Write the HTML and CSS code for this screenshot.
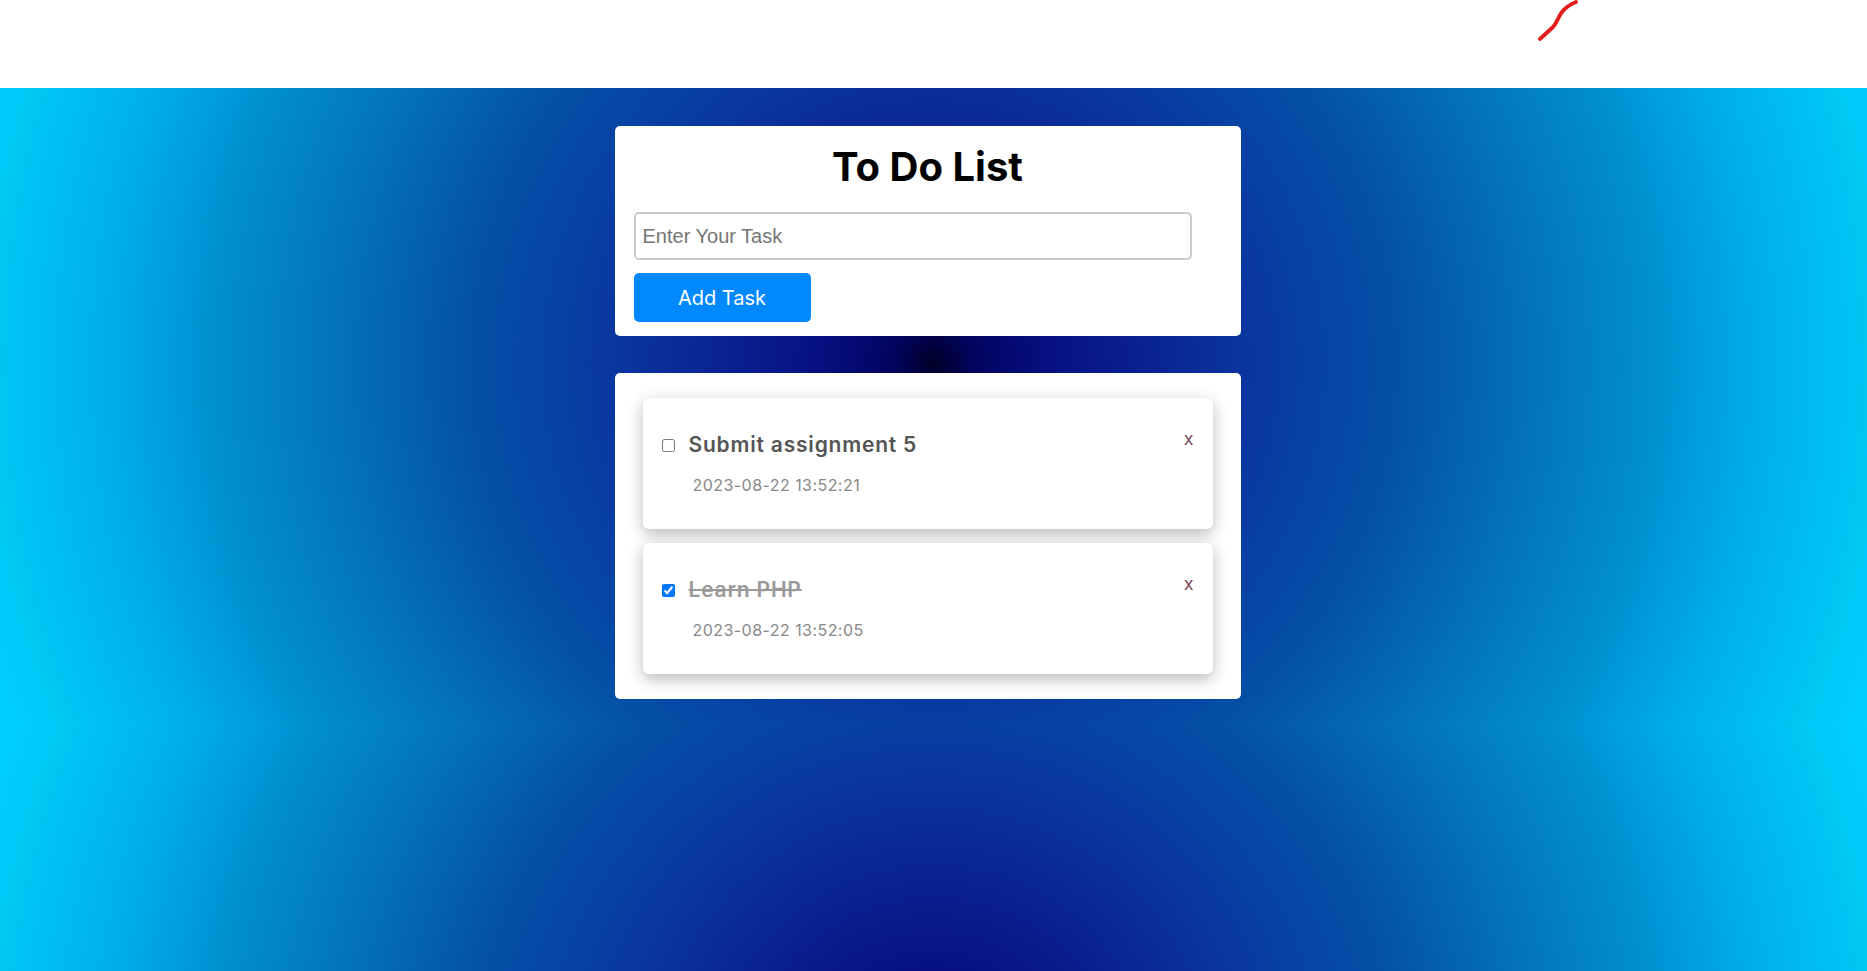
FILE: index.html
```html
<!DOCTYPE html>
<html lang="en">
<head>
<meta charset="utf-8">
<title>To Do List</title>
<link rel="stylesheet" href="styles.css">
</head>
<body>
<header class="topbar">
  <svg class="squiggle" width="46" height="44" viewBox="0 0 46 44">
    <path d="M4 39 L17 27 C21 23 22 17 26 12 C30 7 35 4 40 2" fill="none" stroke="#e31b1b" stroke-width="3.8" stroke-linecap="round" stroke-linejoin="round"/>
  </svg>
</header>
<main class="page">
  <section class="card entry">
    <h1 class="title">To Do List</h1>
    <input class="task-input" type="text" placeholder="Enter Your Task">
    <button class="add-btn">Add Task</button>
  </section>
  <section class="card list">
    <div class="task">
      <div class="task-row">
        <label class="task-label"><input class="check" type="checkbox"><span class="task-name">Submit assignment 5</span></label>
        <span class="del">x</span>
      </div>
      <p class="task-date">2023-08-22 13:52:21</p>
    </div>
    <div class="task">
      <div class="task-row">
        <label class="task-label"><input class="check" type="checkbox" checked><span class="task-name done">Learn PHP</span></label>
        <span class="del">x</span>
      </div>
      <p class="task-date">2023-08-22 13:52:05</p>
    </div>
  </section>
</main>
</body>
</html>
```

FILE: styles.css
```css
html {
  margin: 0;
  height: 100%;
  background: radial-gradient(circle farthest-corner at 50% 50%,
    #000028 0%,
    #02045e 4%,
    #050b78 9%,
    #081585 14%,
    #0a2090 20%,
    #0a35a0 31%,
    #0450a6 46%,
    #0378c0 62%,
    #0090d0 72%,
    #00b0e8 83%,
    #00c8f5 94%,
    #00d0ff 100%) 0 0 / 100% 726px repeat;
}

body {
  margin: 0;
  font-family: "Inter", "Noto Sans", sans-serif;
}

.topbar {
  position: relative;
  height: 88px;
  background: #ffffff;
}

.squiggle {
  position: absolute;
  left: 1536px;
  top: 0;
}

.page {
  display: flex;
  flex-direction: column;
  align-items: center;
  gap: 37px;
  padding-top: 38px;
  padding-right: 12px;
}

.card {
  box-sizing: border-box;
  width: 626px;
  background: #ffffff;
  border-radius: 5px;
}

.entry {
  display: flex;
  flex-direction: column;
  align-items: flex-start;
  padding: 17px 19px 14px;
}

.title {
  align-self: stretch;
  margin: 0 0 21px;
  text-align: center;
  font-size: 40px;
  font-weight: 700;
  line-height: 48px;
  color: #000000;
}

.task-input {
  box-sizing: border-box;
  width: 95%;
  height: 48px;
  margin: 0 0 13px;
  padding: 0 7px;
  border: 2px solid #cccccc;
  border-radius: 5px;
  font-family: "Liberation Sans", Arial, sans-serif;
  font-size: 20px;
  color: #333333;
  background: #ffffff;
  outline: none;
}

.task-input::placeholder {
  color: #757575;
}

.add-btn {
  width: 177px;
  height: 49px;
  border: none;
  border-radius: 5px;
  background: #0088ff;
  color: #ffffff;
  font-family: "Inter", "Noto Sans", sans-serif;
  font-size: 20px;
  font-weight: 400;
}

.list {
  display: flex;
  flex-direction: column;
  gap: 14px;
  padding: 25px 28px;
}

.task {
  box-sizing: border-box;
  height: 131px;
  padding: 32px 19px 0;
  background: #ffffff;
  border-radius: 6px;
  box-shadow: 0 5px 15px rgba(0, 0, 0, 0.28);
}

.task-row {
  display: flex;
  justify-content: space-between;
  align-items: flex-start;
}

.task-label {
  display: flex;
  align-items: center;
  gap: 14px;
  height: 30px;
}

.check {
  width: 13px;
  height: 13px;
  margin: 0;
}

.task-name {
  font-size: 21px;
  font-weight: 600;
  line-height: 30px;
  letter-spacing: 0.8px;
  color: #555555;
}

.task-name.done {
  color: #999999;
  text-decoration: line-through;
}

.del {
  font-size: 18px;
  line-height: 18px;
  color: #7d4d5d;
}

.task-date {
  margin: 13px 0 0 31px;
  font-size: 16px;
  line-height: 24px;
  letter-spacing: 0.45px;
  color: #888888;
}
```
